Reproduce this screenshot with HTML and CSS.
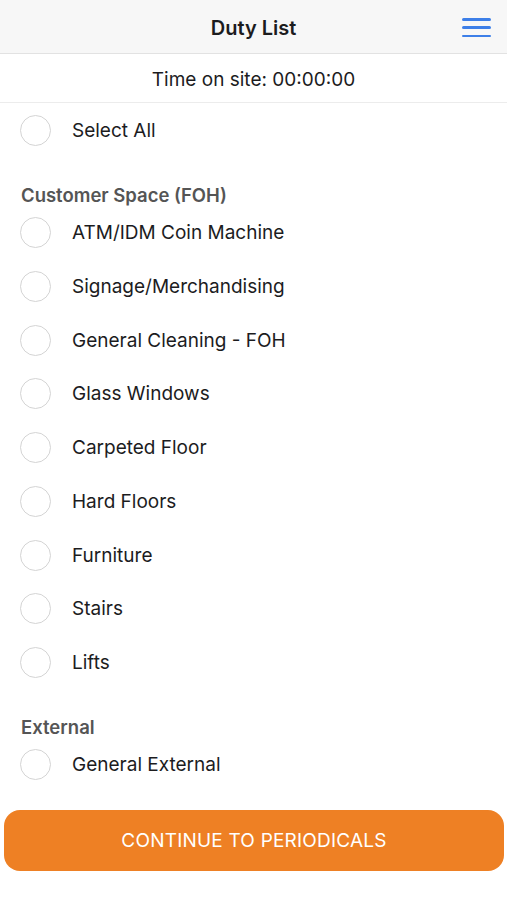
FILE: index.html
```html
<!DOCTYPE html>
<html>
<head>
  <title>Duty List</title>
  <link rel="stylesheet" href="styles.css">
</head>
<body>
  <div class="app">
    <header class="topbar">
      <h1>Duty List</h1>
      <button class="menu" aria-label="Menu">
        <span></span><span></span><span></span>
      </button>
    </header>

    <div class="timer">Time on site: 00:00:00</div>

    <div class="list">
      <div class="row"><span class="check"></span>Select All</div>

      <h2 class="section">Customer Space (FOH)</h2>
      <div class="row"><span class="check"></span>ATM/IDM Coin Machine</div>
      <div class="row"><span class="check"></span>Signage/Merchandising</div>
      <div class="row"><span class="check"></span>General Cleaning - FOH</div>
      <div class="row"><span class="check"></span>Glass Windows</div>
      <div class="row"><span class="check"></span>Carpeted Floor</div>
      <div class="row"><span class="check"></span>Hard Floors</div>
      <div class="row"><span class="check"></span>Furniture</div>
      <div class="row"><span class="check"></span>Stairs</div>
      <div class="row"><span class="check"></span>Lifts</div>

      <h2 class="section">External</h2>
      <div class="row"><span class="check"></span>General External</div>
    </div>

    <div class="footer">
      <button class="continue">CONTINUE TO PERIODICALS</button>
    </div>
  </div>
</body>
</html>
```

FILE: styles.css
```css
body {
  margin: 0;
  font-family: Inter, 'Noto Sans', sans-serif;
  color: #1c1c1e;
  background: #fff;
}

.app {
  height: 900px;
  display: flex;
  flex-direction: column;
}

.topbar {
  height: 53px;
  background: #f7f7f7;
  border-bottom: 1px solid #e2e2e2;
  display: flex;
  align-items: center;
  justify-content: center;
  position: relative;
}

.topbar h1 {
  margin: 2px 0 0;
  font-size: 20px;
  font-weight: 600;
}

.menu {
  position: absolute;
  right: 16px;
  top: 18px;
  width: 29px;
  height: 19px;
  padding: 0;
  border: none;
  background: none;
  display: flex;
  flex-direction: column;
  justify-content: space-between;
}

.menu span {
  display: block;
  height: 2.5px;
  border-radius: 2px;
  background: #3d7fe8;
}

.timer {
  height: 49px;
  padding-top: 2px;
  box-sizing: border-box;
  border-bottom: 1px solid #ececec;
  display: flex;
  align-items: center;
  justify-content: center;
  font-size: 19px;
}

.list {
  height: 677px;
  padding-top: 1px;
  box-sizing: border-box;
  overflow: hidden;
}

.row {
  height: 53.75px;
  display: flex;
  align-items: center;
  padding-left: 20px;
  font-size: 19px;
}

.check {
  width: 29px;
  height: 29px;
  border: 1.5px solid #d4d4d4;
  border-radius: 50%;
  margin-right: 21px;
  flex-shrink: 0;
}

.section {
  margin: 0;
  padding: 26px 0 0 21px;
  height: 22px;
  line-height: 22px;
  font-size: 18.5px;
  font-weight: 600;
  color: #555;
}

.footer {
  padding: 30px 3px 0 4px;
}

.continue {
  width: 100%;
  height: 61px;
  border: none;
  border-radius: 16px;
  background: #ee8024;
  color: #fff;
  font-family: Inter, 'Noto Sans', sans-serif;
  font-size: 19px;
  letter-spacing: 0.2px;
}
```
